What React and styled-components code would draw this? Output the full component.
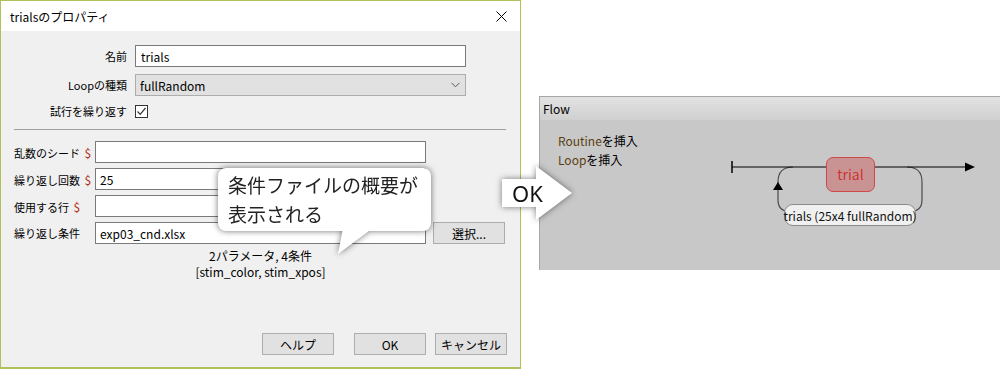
import React from 'react'
import styled, { createGlobalStyle } from 'styled-components'

const GlobalStyle = createGlobalStyle`
  html, body {
    margin: 0;
    padding: 0;
    background: #ffffff;
  }
  body {
    font-family: "Noto Sans CJK JP", "Noto Sans", sans-serif;
    font-size: 12px;
    color: #000;
  }
  * { box-sizing: border-box; }
`

const Page = styled.div`
  position: relative;
  display: flex;
  width: 1000px;
  height: 369px;
  overflow: hidden;
  background: #fff;
`

/* ---------- dialog ---------- */

const Dialog = styled.div`
  position: relative;
  display: flex;
  flex-direction: column;
  width: 521px;
  height: 369px;
  border: 1px solid #b0c05a;
  border-bottom-width: 2px;
  background: #f0f0f0;
`

const TitleBar = styled.div`
  display: flex;
  align-items: center;
  justify-content: space-between;
  height: 30px;
  padding: 0 13px 0 9px;
  background: #fff;
  font-size: 12px;
`

const TopGrid = styled.div`
  display: grid;
  grid-template-columns: 113px 331px;
  column-gap: 8px;
  row-gap: 7px;
  margin: 14px 0 0 13px;
  align-items: center;
`

const RightLabel = styled.div`
  text-align: right;
  white-space: nowrap;
  font-size: 11px;
`

const TextField = styled.div`
  display: flex;
  align-items: center;
  height: 22px;
  padding-left: ${p => p.$pad || 4}px;
  border: 1px solid #7a7a7a;
  background: #fff;
  white-space: nowrap;
`

const SelectField = styled.div`
  display: flex;
  align-items: center;
  justify-content: space-between;
  height: 22px;
  padding: 0 5px 0 4px;
  border: 1px solid #adadad;
  background: #e1e1e1;
`

const CheckBox = styled.div`
  display: flex;
  align-items: center;
  justify-content: center;
  width: 13px;
  height: 13px;
  border: 1px solid #333;
  background: #fff;
`

const Separator = styled.div`
  width: 492px;
  height: 1px;
  margin: 10px 0 0 13px;
  background: #a0a0a0;
`

const LowerGrid = styled.div`
  display: grid;
  grid-template-columns: 81px 331px 72px;
  row-gap: 5px;
  margin: 11px 0 0 13px;
  align-items: center;
`

const LeftLabel = styled.div`
  white-space: nowrap;
  font-size: 11px;
`

const Dollar = styled.span`
  margin-left: 2px;
  color: #b0301a;
  font-size: 12px;
`

const Button = styled.div`
  display: flex;
  align-items: center;
  justify-content: center;
  width: 72px;
  height: 22px;
  margin-left: ${p => p.$ml || 0}px;
  border: 1px solid #adadad;
  background: #e1e1e1;
  font-size: 12px;
`

const Summary = styled.div`
  margin-top: 4px;
  text-align: center;
  line-height: 16px;
`

const ButtonRow = styled.div`
  display: flex;
  justify-content: flex-end;
  margin-top: auto;
  padding: 0 13px 12px 0;
`

/* callout bubble */

const Callout = styled.div`
  position: absolute;
  left: 217px;
  top: 167px;
  filter: drop-shadow(0 0 3px rgba(0, 0, 0, 0.55));
`

const Bubble = styled.div`
  width: 213px;
  height: 63px;
  padding: 2px 0 0 10px;
  border-radius: 8px;
  background: #fff;
  font-size: 19px;
  line-height: 29px;
  color: #222;
  white-space: nowrap;
`

const Tail = styled.svg`
  position: absolute;
  left: 115px;
  top: 60px;
`

/* ---------- flow panel ---------- */

const RightArea = styled.div`
  flex: 1;
  padding: 96px 0 0 18px;
`

const FlowPanel = styled.div`
  display: flex;
  flex-direction: column;
  height: 174px;
  border-top: 1px solid #a6a6a6;
  border-left: 1px solid #a6a6a6;
  background: #c8c8c8;
`

const FlowHeader = styled.div`
  display: flex;
  align-items: center;
  height: 23px;
  padding-left: 3px;
  background: linear-gradient(#e2e2e2, #d0d0d0);
`

const FlowBody = styled.div`
  position: relative;
  flex: 1;
  padding: 11px 0 0 18px;
  line-height: 19px;
`

const Keyword = styled.span`
  color: #5a4010;
`

const Diagram = styled.svg`
  position: absolute;
  left: 0;
  top: 0;
`

const RoutineBox = styled.div`
  position: absolute;
  left: 286px;
  top: 37px;
  width: 49px;
  height: 35px;
  display: flex;
  align-items: center;
  justify-content: center;
  border: 1px solid #d04848;
  border-radius: 7px;
  background: #c99393;
  color: #cc3535;
  font-size: 14px;
`

const LoopLabel = styled.div`
  position: absolute;
  left: 244px;
  top: 84px;
  width: 132px;
  height: 22px;
  display: flex;
  align-items: center;
  justify-content: center;
  border: 1px solid #8c8c8c;
  border-radius: 9px;
  background: #f0f0f0;
  color: #111;
  white-space: nowrap;
`

/* OK arrow overlay */

const OkArrow = styled.div`
  position: absolute;
  left: 500px;
  top: 164px;
  width: 76px;
  height: 60px;
  filter: drop-shadow(0 0 3px rgba(0, 0, 0, 0.5));
`

const OkText = styled.div`
  position: absolute;
  left: 12px;
  top: 14px;
  font-family: "Noto Sans", sans-serif;
  font-size: 22px;
  line-height: 30px;
  color: #111;
`

const CloseIcon = () => (
  <svg width="11" height="11" viewBox="0 0 11 11">
    <path d="M0.5 0.5 L10.5 10.5 M10.5 0.5 L0.5 10.5" stroke="#000" strokeWidth="1" fill="none" />
  </svg>
)

const Chevron = () => (
  <svg width="9" height="6" viewBox="0 0 9 6">
    <polyline points="0.5,0.8 4.5,4.8 8.5,0.8" stroke="#555" strokeWidth="1" fill="none" />
  </svg>
)

const Check = () => (
  <svg width="11" height="11" viewBox="0 0 11 11">
    <polyline points="1.5,5.5 4.2,8.3 9.5,2" stroke="#333" strokeWidth="1.2" fill="none" />
  </svg>
)

export default function App() {
  return (
    <Page>
      <GlobalStyle />
      <Dialog>
        <TitleBar>
          <span>trialsのプロパティ</span>
          <CloseIcon />
        </TitleBar>

        <TopGrid>
          <RightLabel>名前</RightLabel>
          <TextField $pad={5}>trials</TextField>
          <RightLabel>Loopの種類</RightLabel>
          <SelectField>
            <span>fullRandom</span>
            <Chevron />
          </SelectField>
          <RightLabel>試行を繰り返す</RightLabel>
          <CheckBox><Check /></CheckBox>
        </TopGrid>

        <Separator />

        <LowerGrid>
          <LeftLabel>乱数のシード <Dollar>$</Dollar></LeftLabel>
          <TextField />
          <span />
          <LeftLabel>繰り返し回数 <Dollar>$</Dollar></LeftLabel>
          <TextField>25</TextField>
          <span />
          <LeftLabel>使用する行 <Dollar>$</Dollar></LeftLabel>
          <TextField />
          <span />
          <LeftLabel>繰り返し条件</LeftLabel>
          <TextField>exp03_cnd.xlsx</TextField>
          <Button $ml={7}>選択...</Button>
        </LowerGrid>

        <Summary>
          2パラメータ, 4条件<br />
          [stim_color, stim_xpos]
        </Summary>

        <ButtonRow>
          <Button>ヘルプ</Button>
          <Button $ml={20}>OK</Button>
          <Button $ml={9}>キャンセル</Button>
        </ButtonRow>

        <Callout>
          <Bubble>
            条件ファイルの概要が<br />
            表示される
          </Bubble>
          <Tail width="45" height="30" viewBox="0 0 45 30">
            <polygon points="10,0 40,0 5,26" fill="#fff" />
          </Tail>
        </Callout>
      </Dialog>

      <RightArea>
        <FlowPanel>
          <FlowHeader>Flow</FlowHeader>
          <FlowBody>
            <div><Keyword>Routine</Keyword>を挿入</div>
            <div><Keyword>Loop</Keyword>を挿入</div>
            <Diagram width="461" height="150" viewBox="0 0 461 150">
              <path
                d="M253 47 Q238 47 238 62 L238 80 Q238 92 252 92 L368 92 Q382 92 382 80 L382 62 Q382 47 367 47"
                stroke="#4a4a4a" strokeWidth="1.2" fill="none"
              />
              <polygon points="238,62 233,70 243,70" fill="#000" />
              <line x1="192" y1="47" x2="427" y2="47" stroke="#000" strokeWidth="1.2" />
              <line x1="192" y1="41" x2="192" y2="53" stroke="#000" strokeWidth="1.5" />
              <polygon points="435,47 425,42.5 425,51.5" fill="#000" />
            </Diagram>
            <RoutineBox>trial</RoutineBox>
            <LoopLabel>trials (25x4 fullRandom)</LoopLabel>
          </FlowBody>
        </FlowPanel>
      </RightArea>

      <OkArrow>
        <svg width="76" height="60" viewBox="0 0 76 60">
          <polygon points="2,15 36,15 36,2 72,29 36,56 36,43 2,43" fill="#fff" />
        </svg>
        <OkText>OK</OkText>
      </OkArrow>
    </Page>
  )
}
